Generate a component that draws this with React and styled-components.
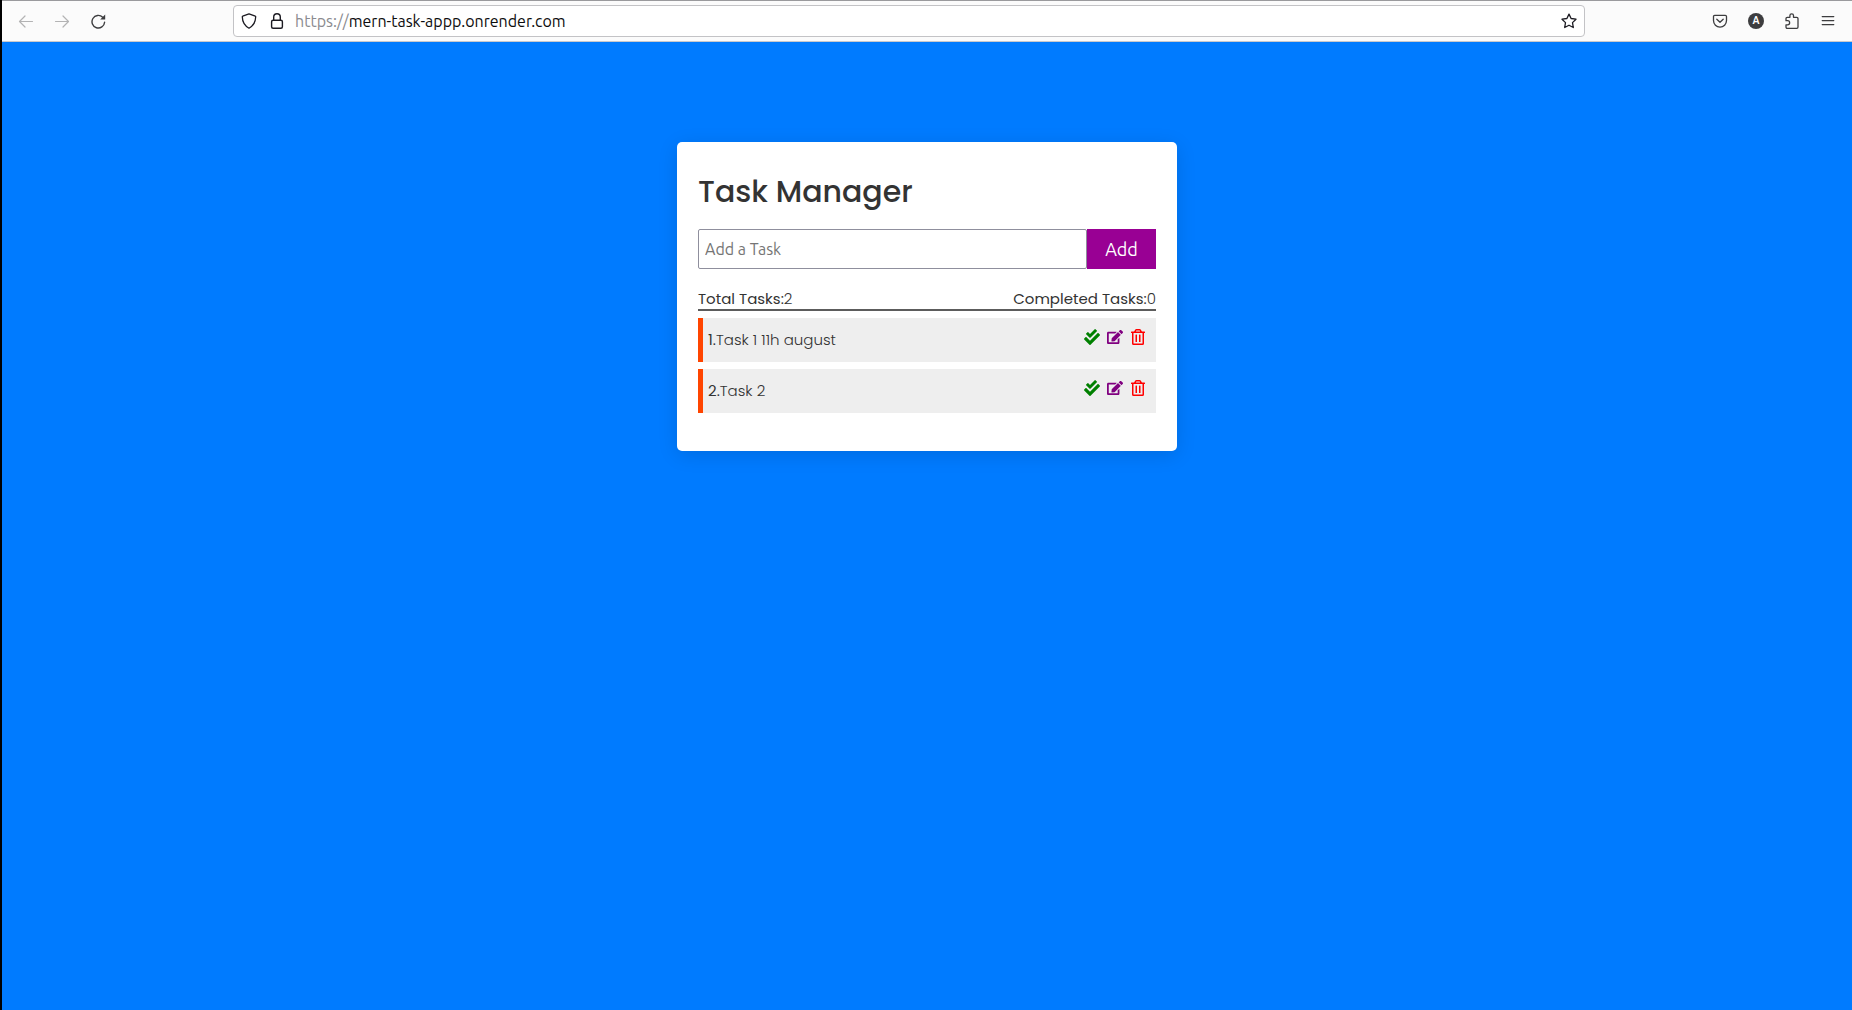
import React, { useState } from "react";
import styled, { createGlobalStyle } from "styled-components";
import { FaCheckDouble, FaEdit, FaRegTrashAlt } from "react-icons/fa";

const GlobalStyle = createGlobalStyle`
  *, *::before, *::after { box-sizing: border-box; }
  body { margin: 0; background: #007bff; }
  h1, p, ul { margin: 0; padding: 0; }
`;

const uiFont = `Ubuntu, "Noto Sans", "Open Sans", sans-serif`;
const pageFont = `Poppins, Inter, "Open Sans", sans-serif`;

const Window = styled.div`
  min-height: 100vh;
  display: flex;
  flex-direction: column;
  border-left: 2px solid #000;
  background: #007bff;
`;

const Toolbar = styled.header`
  display: flex;
  align-items: center;
  height: 42px;
  padding: 0 6px;
  border-top: 1px solid #9a9a9d;
  border-bottom: 1px solid #c9c9cc;
  background: #fbfbfb;
`;

const ToolButton = styled.button`
  display: flex;
  align-items: center;
  justify-content: center;
  width: 36px;
  height: 32px;
  padding: 0;
  border: 0;
  background: none;
  color: ${(p) => (p.disabled ? "#b3b3b4" : "#3d3d3f")};
`;

const Spacer = styled.div`
  flex: 0 1 117px;
`;

const AddressBar = styled.form`
  flex: 1;
  display: flex;
  align-items: center;
  gap: 8px;
  height: 32px;
  padding: 0 7px;
  border: 1px solid #c3c3c6;
  border-radius: 4px;
  background: #fff;
  color: #1c1b22;
  font: 16px/20px ${uiFont};
`;

const AddressIcon = styled.button`
  display: flex;
  padding: 0;
  margin-right: ${(p) => p.$gap || 0}px;
  border: 0;
  background: none;
  color: inherit;
`;

const AddressField = styled.label`
  flex: 1;
  display: flex;
  color: #8b8b8f;
`;

const AddressInput = styled.input`
  flex: 1;
  min-width: 0;
  padding: 0;
  border: 0;
  outline: 0;
  background: none;
  color: #0c0c0d;
  font: inherit;
`;

const Main = styled.main`
  flex: 1;
  display: flex;
  align-items: flex-start;
  justify-content: center;
  padding: 100px 20px 20px;
  font-family: ${pageFont};
`;

const Card = styled.section`
  width: 100%;
  max-width: 500px;
  padding: 28px 21px 38px;
  border-radius: 5px;
  background: #fff;
  box-shadow: 0 4px 20px rgba(0, 0, 0, 0.12);
`;

const Title = styled.h1`
  color: #333;
  font-size: 30px;
  font-weight: 500;
  line-height: 43px;
`;

const TaskForm = styled.form`
  display: flex;
  height: 40px;
  margin-top: 16px;
  font-family: ${uiFont};
`;

const TaskInput = styled.input`
  flex: 1;
  min-width: 0;
  padding: 0 6px;
  border: 1px solid #8f8f9d;
  border-radius: 2px;
  background: #fff;
  color: #333;
  font: inherit;
  font-size: 16px;
  &::placeholder { color: #757575; opacity: 1; }
`;

const AddButton = styled.button`
  width: 69px;
  padding: 0;
  border: 0;
  background: #990094;
  color: #fff;
  font: inherit;
  font-size: 18px;
`;

const Summary = styled.div`
  display: flex;
  justify-content: space-between;
  margin-top: 19px;
  border-bottom: 2px solid #5c5c5c;
  color: #333;
  font-size: 15px;
  line-height: 21px;
`;

const Count = styled.span`
  font-weight: 300;
`;

const TaskList = styled.ul`
  display: flex;
  flex-direction: column;
  gap: 7px;
  margin-top: 7px;
  list-style: none;
`;

const TaskRow = styled.li`
  display: flex;
  align-items: center;
  justify-content: space-between;
  height: 44px;
  padding: 0 10px 0 5px;
  border-left: 5px solid #ff4500;
  background: #eee;
`;

const TaskName = styled.p`
  color: #333;
  font-size: 15px;
  font-weight: 300;
  line-height: 24px;
`;

const TaskNumber = styled.b`
  font-weight: 400;
`;

const Actions = styled.div`
  display: flex;
  gap: 7px;
  padding-bottom: 6px;
`;

const ActionButton = styled.button`
  display: flex;
  padding: 0;
  border: 0;
  background: none;
  color: ${(p) => p.$tone};
  font-size: 16px;
  cursor: pointer;
`;

const Icon = ({ children, size = 16, width = 1.2 }) => (
  <svg width={size} height={size} viewBox="0 0 16 16" fill="none" stroke="currentColor"
    strokeWidth={width} strokeLinecap="round" strokeLinejoin="round" aria-hidden="true">
    {children}
  </svg>
);

const BackIcon = () => <Icon><path d="M14.5 8.5H1.6M7 3 1.5 8.5 7 14" /></Icon>;
const ForwardIcon = () => <Icon><path d="M1.5 8.5h12.9M9 3l5.5 5.5L9 14" /></Icon>;
const ReloadIcon = () => (
  <Icon width={1.4}>
    <path d="M14.6 9.2A6.3 6.3 0 1 1 12.7 4.2" />
    <path d="M15.2 1.4v5H10.2z" fill="currentColor" stroke="none" />
  </Icon>
);
const ShieldIcon = () => (
  <Icon width={1.3}><path d="M8 .9 14.3 3.2c.3.1.4.3.4.6C14.6 9 12 13 8 15.2 4 13 1.4 9 1.3 3.8c0-.3.1-.5.4-.6z" /></Icon>
);
const LockIcon = () => (
  <Icon width={1.4}>
    <rect x="2.6" y="7.2" width="10.8" height="8" rx="1.5" />
    <path d="M4.7 7V4a3.3 3.3 0 0 1 6.6 0v3" />
  </Icon>
);
const StarIcon = () => (
  <Icon width={1.3}><path d="m8 1.1 2.1 4.4 4.9.7-3.5 3.4.8 4.9L8 12.2l-4.3 2.3.8-4.9L1 6.2l4.9-.7z" /></Icon>
);
const PocketIcon = () => (
  <Icon width={1.3}>
    <path d="M2.7 2.4h10.6c.7 0 1.2.5 1.2 1.2v4a6.5 6.5 0 0 1-13 0v-4c0-.7.5-1.2 1.2-1.2z" />
    <path d="M4.8 6.2 8 9.3l3.2-3.1" />
  </Icon>
);
const PuzzleIcon = () => (
  <Icon width={1.3}>
    <path d="M2 7.2V5.5c0-.7.5-1.2 1.2-1.2h2.7V2.6a1.8 1.8 0 0 1 3.6 0v1.7h3.3c.7 0 1.2.5 1.2 1.2v8.6c0 .7-.5 1.2-1.2 1.2H3.2c-.7 0-1.2-.5-1.2-1.2v-2.3h1.6a2 2 0 0 0 0-4.1H2" />
  </Icon>
);
const MenuIcon = () => <Icon width={1.2}><path d="M2.2 3.6h11.6M2.2 7.6h11.6M2.2 11.6h11.6" /></Icon>;

const AccountBadge = styled.span`
  display: flex;
  align-items: center;
  justify-content: center;
  width: 16px;
  height: 16px;
  border-radius: 50%;
  background: #3d3d3f;
  color: #fff;
  font: 700 10px/16px ${uiFont};
`;

const initialTasks = [
  { id: 1, name: "Task 1 11h august", completed: false },
  { id: 2, name: "Task 2", completed: false },
];

function BrowserToolbar() {
  return (
    <Toolbar>
      <ToolButton aria-label="Back" disabled><BackIcon /></ToolButton>
      <ToolButton aria-label="Forward" disabled><ForwardIcon /></ToolButton>
      <ToolButton aria-label="Reload"><ReloadIcon /></ToolButton>
      <Spacer />
      <AddressBar onSubmit={(e) => e.preventDefault()}>
        <AddressIcon type="button" aria-label="Tracking protection" $gap={4}><ShieldIcon /></AddressIcon>
        <AddressIcon type="button" aria-label="Connection secure" $gap={2}><LockIcon /></AddressIcon>
        <AddressField>
          https://
          <AddressInput aria-label="Address" defaultValue="mern-task-appp.onrender.com" />
        </AddressField>
        <AddressIcon type="button" aria-label="Bookmark"><StarIcon /></AddressIcon>
      </AddressBar>
      <Spacer />
      <ToolButton aria-label="Pocket"><PocketIcon /></ToolButton>
      <ToolButton aria-label="Account"><AccountBadge>A</AccountBadge></ToolButton>
      <ToolButton aria-label="Extensions"><PuzzleIcon /></ToolButton>
      <ToolButton aria-label="Menu"><MenuIcon /></ToolButton>
    </Toolbar>
  );
}

export default function App() {
  const [tasks, setTasks] = useState(initialTasks);
  const [name, setName] = useState("");

  const addTask = (e) => {
    e.preventDefault();
    if (!name.trim()) return;
    setTasks([...tasks, { id: Date.now(), name, completed: false }]);
    setName("");
  };
  const complete = (id) =>
    setTasks(tasks.map((t) => (t.id === id ? { ...t, completed: true } : t)));
  const edit = (task) => setName(task.name);
  const remove = (id) => setTasks(tasks.filter((t) => t.id !== id));

  return (
    <>
      <GlobalStyle />
      <Window>
        <BrowserToolbar />
        <Main>
          <Card>
            <Title>Task Manager</Title>
            <TaskForm onSubmit={addTask}>
              <TaskInput aria-label="Add a Task" placeholder="Add a Task" value={name}
                onChange={(e) => setName(e.target.value)} />
              <AddButton type="submit">Add</AddButton>
            </TaskForm>
            <Summary>
              <p>Total Tasks:<Count>{tasks.length}</Count></p>
              <p>Completed Tasks:<Count>{tasks.filter((t) => t.completed).length}</Count></p>
            </Summary>
            <TaskList>
              {tasks.map((task, i) => (
                <TaskRow key={task.id}>
                  <TaskName><TaskNumber>{i + 1}.</TaskNumber>{task.name}</TaskName>
                  <Actions>
                    <ActionButton aria-label="Complete task" $tone="green" onClick={() => complete(task.id)}><FaCheckDouble /></ActionButton>
                    <ActionButton aria-label="Edit task" $tone="purple" onClick={() => edit(task)}><FaEdit /></ActionButton>
                    <ActionButton aria-label="Delete task" $tone="red" onClick={() => remove(task.id)}><FaRegTrashAlt /></ActionButton>
                  </Actions>
                </TaskRow>
              ))}
            </TaskList>
          </Card>
        </Main>
      </Window>
    </>
  );
}
